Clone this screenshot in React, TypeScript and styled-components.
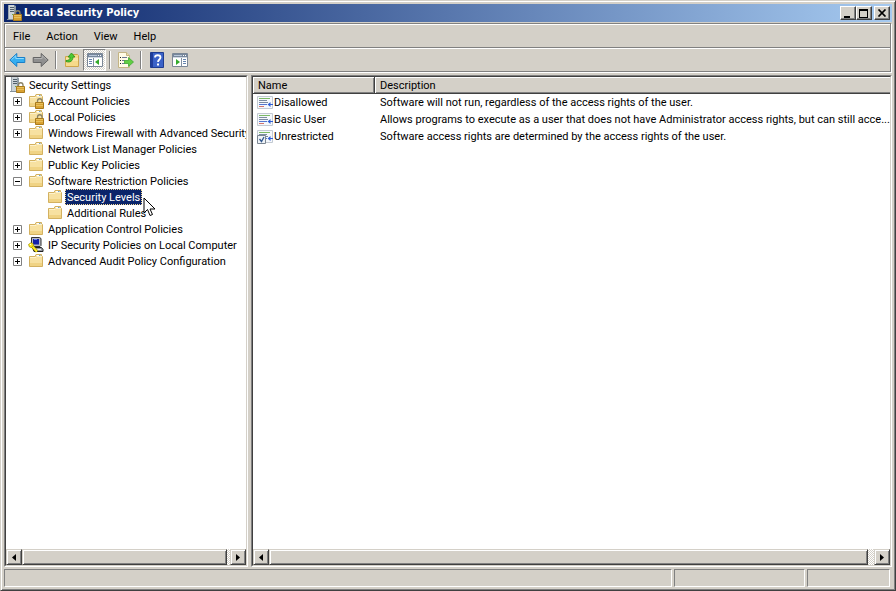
import React from "react";
import styled, { createGlobalStyle, css } from "styled-components";

const face = "#d4d0c8";
const shadow = "#808080";
const dark = "#404040";
const navy = "#0a246a";

const GlobalStyle = createGlobalStyle`
  *, *::before, *::after { box-sizing: border-box; }
  html, body { margin: 0; overflow: hidden; }
  body, button, table {
    font-family: Roboto, Tahoma, "DejaVu Sans", sans-serif;
    font-size: 11px;
    line-height: 16px;
    color: #000;
  }
  button { border: 0; padding: 0; background: none; cursor: default; }
  svg { display: block; flex: none; }
`;

const raised = css`
  background: ${face};
  border: 1px solid;
  border-color: ${face} ${dark} ${dark} ${face};
  box-shadow: inset 1px 1px #fff, inset -1px -1px ${shadow};
`;

const Window = styled.main`
  ${raised}
  display: flex;
  flex-direction: column;
  height: 100vh;
  padding: 3px;
`;

const TitleBar = styled.header`
  display: flex;
  align-items: center;
  height: 18px;
  flex: none;
  padding: 0 2px;
  background: linear-gradient(90deg, ${navy}, #a6caf0);
`;

const Title = styled.h1`
  flex: 1;
  margin: 0 0 0 2px;
  font-family: "DejaVu Sans Condensed", Tahoma, sans-serif;
  font-size: 11px;
  line-height: 18px;
  font-weight: 700;
  color: #fff;
`;

const CaptionButtons = styled.div`
  display: flex;
`;

const CaptionButton = styled.button<{ $apart?: boolean }>`
  display: grid;
  place-items: center;
  width: 16px;
  height: 14px;
  margin-left: ${(p) => (p.$apart ? 2 : 0)}px;
  background: ${face};
  border: 1px solid;
  border-color: #fff ${dark} ${dark} #fff;
  box-shadow: inset -1px -1px ${shadow};
`;

const Bars = styled.div`
  flex: none;
  margin: 1px 1px 3px 0;
  border: 1px solid ${shadow};
  box-shadow: 1px 1px #fff;
`;

const MenuBar = styled.nav`
  display: flex;
  height: 24px;
  border-bottom: 1px solid ${shadow};
  box-shadow: inset 1px 1px #fff;
`;

const MenuItem = styled.button`
  padding: 2px 8px 0;
`;

const ToolBar = styled.div`
  display: flex;
  align-items: center;
  height: 23px;
  padding-left: 1px;
  box-shadow: inset 1px 1px #fff;
`;

const ToolButton = styled.button<{ $pressed?: boolean }>`
  display: grid;
  place-items: center;
  width: 23px;
  height: 22px;
  ${(p) =>
    p.$pressed &&
    css`
      border: 1px solid;
      border-color: ${shadow} #fff #fff ${shadow};
      background: repeating-conic-gradient(#fff 0 25%, ${face} 0 50%) 0 0 / 2px 2px;
    `}
`;

const Separator = styled.div`
  width: 2px;
  height: 18px;
  margin: 0 3px;
  border-left: 1px solid ${shadow};
  border-right: 1px solid #fff;
`;

const Panes = styled.div`
  flex: 1;
  min-height: 0;
  display: grid;
  grid-template-columns: 244px minmax(0, 1fr);
  gap: 3px;
`;

const Pane = styled.section`
  display: flex;
  flex-direction: column;
  min-height: 0;
  min-width: 0;
  background: #fff;
  border: 1px solid;
  border-color: ${shadow} #fff #fff ${shadow};
`;

const PaneInner = styled.div`
  display: flex;
  flex-direction: column;
  flex: 1;
  min-height: 0;
  border: 1px solid;
  border-color: ${dark} ${face} ${face} ${dark};
`;

const Content = styled.div`
  flex: 1;
  min-height: 0;
  overflow: hidden;
`;

const Tree = styled.ul`
  list-style: none;
  margin: 0;
  padding: 0;
`;

const TreeRow = styled.li<{ $level: number }>`
  position: relative;
  display: flex;
  align-items: center;
  height: 16px;
  padding-left: ${(p) => [3, 7, 41][p.$level]}px;
  white-space: nowrap;
`;

const Expander = styled.button<{ $empty?: boolean }>`
  width: 9px;
  height: 9px;
  flex: none;
  margin-right: 6px;
  visibility: ${(p) => (p.$empty ? "hidden" : "visible")};
`;

const TreeLabel = styled.button<{ $selected?: boolean }>`
  height: 16px;
  margin-left: 2px;
  padding: 2px 2px 0;
  line-height: 14px;
  white-space: nowrap;
  ${(p) =>
    p.$selected &&
    css`
      color: #fff;
      background: ${navy};
      outline: 1px dotted #f5db95;
      outline-offset: -1px;
    `}
`;

const Pointer = styled.svg`
  position: absolute;
  left: 137px;
  top: 8px;
  z-index: 1;
`;

const List = styled.table`
  width: 100%;
  table-layout: fixed;
  border-collapse: separate;
  border-spacing: 0;
`;

const HeadCell = styled.th<{ $name?: boolean }>`
  width: ${(p) => (p.$name ? "122px" : "auto")};
  height: 17px;
  padding: 2px 5px 0;
  text-align: left;
  font-weight: 400;
  line-height: 14px;
  background: ${face};
  border-bottom: 1px solid ${dark};
  border-right: ${(p) => (p.$name ? `1px solid ${dark}` : "0")};
  box-shadow: inset 1px 1px #fff, inset ${(p) => (p.$name ? "-1px" : "0")} -1px ${shadow};
`;

const Cell = styled.td`
  height: 17px;
  padding: 1px 0 0 5px;
  line-height: 16px;
  white-space: nowrap;
  overflow: hidden;
  text-overflow: ellipsis;
`;

const NameCell = styled.div`
  display: flex;
  align-items: center;
  gap: 1px;
  margin-left: -1px;
`;

const ScrollBar = styled.div`
  display: flex;
  height: 16px;
  flex: none;
  background: repeating-conic-gradient(#fff 0 25%, ${face} 0 50%) 0 0 / 2px 2px;
`;

const ScrollButton = styled.button`
  ${raised}
  display: grid;
  place-items: center;
  width: 16px;
  height: 16px;
`;

const Thumb = styled.div<{ $rest: number }>`
  ${raised}
  flex: 1;
  margin-right: ${(p) => p.$rest}px;
`;

const StatusBar = styled.footer`
  display: grid;
  grid-template-columns: minmax(0, 1fr) 131px 83px;
  gap: 2px;
  height: 18px;
  flex: none;
  margin: 2px 2px 0 0;
`;

const StatusCell = styled.div`
  border: 1px solid;
  border-color: ${shadow} #fff #fff ${shadow};
`;

const Lock = () => (
  <g>
    <path d="M9.500 10V8a2 2 0 0 1 4.500 0v2" fill="none" stroke="#8b8468" strokeWidth="1.300" />
    <path d="M7.500 9.500h8v6h-8z" fill="#d9a233" stroke="#a97a1c" />
    <path d="M8 10.500h7M8 12.500h7" stroke="#e8c15c" />
  </g>
);

const ServerLockIcon = () => (
  <svg width="16" height="16" viewBox="0 0 16 16">
    <path d="M2 0h6l2 1v13l-2 1H2z" fill="#8e9ba5" />
    <path d="M2 0h6v15H2z" fill="#ccd3d8" />
    <path d="M2 0h1v15H2z" fill="#9aa6af" />
    <path d="M4 2.500h4M4 4.500h4M4 6.500h4" stroke="#4f5e6a" />
    <path d="M6 9h1v1H6z" fill="#62b34b" />
    <path d="M1 14.500h8" stroke="#84919b" />
    <Lock />
  </svg>
);

const FolderIcon = ({ locked }: { locked?: boolean }) => (
  <svg width="16" height="16" viewBox="0 0 16 16">
    <path d="M1.500 3.500h5.500l1-2h5.500v2h1v10h-13z" fill="#f3d88f" stroke="#d3b160" />
    <path d="M8.500 2.500h4" stroke="#fff" />
    <path d="M11 2.500h1.500" stroke="#6aa3cf" />
    <path d="M2 4h12v9H2z" fill="#f7e1a1" />
    <path d="M2 4.500h6l1-1h5" stroke="#fdf2cd" fill="none" />
    <path d="M2 10h12v3H2z" fill="#f0d384" />
    {locked && <Lock />}
  </svg>
);

const IpSecIcon = () => (
  <svg width="16" height="16" viewBox="0 0 16 16">
    <path d="M3.500.5h8l1.500 1v7l-1 1h-8.500z" fill="#b8bac4" stroke="#333" />
    <path d="M5 2h6v5.500H5z" fill="#1420a8" />
    <path d="M6 2.500h3" stroke="#6a86f0" />
    <path d="M4.500 10.500h9l1.500 2v2H6z" fill="#9a9da6" stroke="#222" />
    <path d="M8 12.500h5" stroke="#eee" />
    <path d="M4 9l5 5.500" stroke="#867500" strokeWidth="3" />
    <path d="M4 9l5 5.500" stroke="#ffed20" strokeWidth="2" />
    <path d="M.5 7.500l2-1.500h2l1 2-2 2.500-2-.5z" fill="#ffed20" stroke="#a08e00" strokeWidth=".7" />
    <path d="M2 7h1v1H2z" fill="#fff" />
  </svg>
);

const ArrowIcon = ({ forward }: { forward?: boolean }) => {
  const fill = forward ? "#8f8f8f" : "#36aef0";
  const line = forward ? "#646464" : "#1a7fc8";
  const light = forward ? "#b4b4b4" : "#8edcff";
  return (
    <svg width="17" height="16" viewBox="0 0 17 16">
      <g transform={forward ? "matrix(-1 0 0 1 17 0)" : undefined}>
        <path d="M.8 8l7-6.500v4h8v5h-8v4z" fill={fill} stroke={line} strokeLinejoin="round" />
        <path d="M2.500 7.700l4.300-4v2.800h8" fill="none" stroke={light} />
      </g>
    </svg>
  );
};

const UpFolderIcon = () => (
  <svg width="16" height="16" viewBox="0 0 16 16">
    <path d="M1.500 4.500h6l1-2h5l1 1v11h-13z" fill="#f6da8a" stroke="#cfa64c" />
    <path d="M2 6h12v3H2z" fill="#f9e4a4" />
    <path d="M2 8.500c3 0 4-1 4-3.500H4L7.500 1 11 5H9c0 4-3 6-7 4.500z" fill="#4dc934" stroke="#279018" strokeWidth=".8" />
  </svg>
);

const PaneIcon = ({ right }: { right?: boolean }) => (
  <svg width="16" height="14" viewBox="0 0 16 14">
    <path d="M.5.5h15v13H.5z" fill="#fff" stroke="#7b8796" />
    <path d="M1 1h14v3H1z" fill="#77879c" />
    <path d="M2 2.500h8" stroke="#b9c7d9" />
    <path d="M11 2.500h1M13 2.500h1" stroke="#fff" />
    <path d="M1 4.500h14" stroke="#d0d8e2" />
    {right ? (
      <>
        <path d="M9.500 5v8" stroke="#8290a2" />
        <path d="M4 6l4 3-4 3z" fill="#34aa2b" />
        <path d="M11 6.500h3M11 8.500h3M11 10.500h3" stroke="#6684ad" />
      </>
    ) : (
      <>
        <path d="M6.500 5v8" stroke="#8290a2" />
        <path d="M12 6L8 9l4 3z" fill="#34aa2b" />
        <path d="M2 6.500h3M2 8.500h3M2 10.500h3" stroke="#6684ad" />
      </>
    )}
  </svg>
);

const ExportIcon = () => (
  <svg width="17" height="16" viewBox="0 0 17 16">
    <path d="M1.500.5h8l3 3v12h-11z" fill="#fffbe6" stroke="#c4b484" />
    <path d="M9.500.5v3h3" fill="#e9dcae" stroke="#c4b484" />
    <path d="M3 5.500h1M3 8.500h1M3 11.500h1" stroke="#222" />
    <path d="M5 5.500h5M5 8.500h3M5 11.500h3" stroke="#6c7794" />
    <path d="M7.500 8.500h4v-3l5 4.500-5 4.500v-3h-4z" fill="#61ce43" stroke="#3fa832" strokeWidth=".8" />
  </svg>
);

const HelpIcon = () => (
  <svg width="14" height="16" viewBox="0 0 14 16">
    <path d="M.5.5h13v15H.5z" fill="#3b62c8" stroke="#1e3c91" />
    <path d="M1 1h2v14H1z" fill="#203d9a" />
    <path d="M5 5.500C5 2.500 10.500 2.500 10.500 5.500c0 2-2.500 2-2.500 4.500" fill="none" stroke="#fff" strokeWidth="1.800" />
    <path d="M7 11.500h2v2H7z" fill="#fff" />
  </svg>
);

const LevelIcon = ({ checked }: { checked?: boolean }) => (
  <svg width="16" height="14" viewBox="0 0 16 14">
    <path d="M.5.5h15v12H.5z" fill="#f5f8fc" stroke="#c3cad2" />
    <path d="M2 2.500h11" stroke="#7dba66" />
    <path d="M2 4.500h8M2 6.500h9" stroke="#7c8ba0" />
    <path d="M2 8.500h8" stroke="#5577d0" />
    <path d="M2 10.500h5" stroke="#d5766c" />
    <path d="M10.500 8.500l3-2.500v2H16v1h-2.500v2z" fill="#315fd3" />
    {checked && (
      <>
        <path d="M.5 5.500h8v8h-8z" fill="#eef2f6" stroke="#7b8692" />
        <path d="M2.500 9l2 2.500L7 7" fill="none" stroke="#31578f" strokeWidth="1.300" />
      </>
    )}
  </svg>
);

type Item = {
  label: string;
  level: number;
  icon: React.ReactNode;
  state?: "open" | "closed";
  selected?: boolean;
};

const items: Item[] = [
  { label: "Security Settings", level: 0, icon: <ServerLockIcon /> },
  { label: "Account Policies", level: 1, icon: <FolderIcon locked />, state: "closed" },
  { label: "Local Policies", level: 1, icon: <FolderIcon locked />, state: "closed" },
  { label: "Windows Firewall with Advanced Security", level: 1, icon: <FolderIcon />, state: "closed" },
  { label: "Network List Manager Policies", level: 1, icon: <FolderIcon /> },
  { label: "Public Key Policies", level: 1, icon: <FolderIcon />, state: "closed" },
  { label: "Software Restriction Policies", level: 1, icon: <FolderIcon />, state: "open" },
  { label: "Security Levels", level: 2, icon: <FolderIcon />, selected: true },
  { label: "Additional Rules", level: 2, icon: <FolderIcon /> },
  { label: "Application Control Policies", level: 1, icon: <FolderIcon />, state: "closed" },
  { label: "IP Security Policies on Local Computer", level: 1, icon: <IpSecIcon />, state: "closed" },
  { label: "Advanced Audit Policy Configuration", level: 1, icon: <FolderIcon />, state: "closed" },
];

const levels = [
  { name: "Disallowed", text: "Software will not run, regardless of the access rights of the user." },
  {
    name: "Basic User",
    text: "Allows programs to execute as a user that does not have Administrator access rights, but can still acce...",
  },
  { name: "Unrestricted", text: "Software access rights are determined by the access rights of the user.", checked: true },
];

const HorizontalScroll = ({ rest }: { rest: number }) => (
  <ScrollBar>
    <ScrollButton aria-label="Scroll left">
      <svg width="4" height="7" viewBox="0 0 4 7">
        <path d="M4 0v7L0 3.500z" />
      </svg>
    </ScrollButton>
    <Thumb $rest={rest} />
    <ScrollButton aria-label="Scroll right">
      <svg width="4" height="7" viewBox="0 0 4 7">
        <path d="M0 0v7l4-3.500z" />
      </svg>
    </ScrollButton>
  </ScrollBar>
);

export default function App() {
  return (
    <>
      <GlobalStyle />
      <Window>
        <TitleBar>
          <ServerLockIcon />
          <Title>Local Security Policy</Title>
          <CaptionButtons>
            <CaptionButton aria-label="Minimize">
              <svg width="10" height="9" viewBox="0 0 10 9">
                <path d="M1 7h6v2H1z" />
              </svg>
            </CaptionButton>
            <CaptionButton aria-label="Maximize">
              <svg width="10" height="9" viewBox="0 0 10 9">
                <path d="M0 0h9v9H0zM1 2v6h7V2z" fillRule="evenodd" />
              </svg>
            </CaptionButton>
            <CaptionButton aria-label="Close" $apart>
              <svg width="10" height="8" viewBox="0 0 10 8">
                <path d="M1.500.5l7 7M8.500.5l-7 7" stroke="#000" strokeWidth="1.700" />
              </svg>
            </CaptionButton>
          </CaptionButtons>
        </TitleBar>
        <Bars>
          <MenuBar aria-label="Menu">
            {["File", "Action", "View", "Help"].map((name) => (
              <MenuItem key={name}>{name}</MenuItem>
            ))}
          </MenuBar>
          <ToolBar role="toolbar">
            <ToolButton aria-label="Back"><ArrowIcon /></ToolButton>
            <ToolButton aria-label="Forward"><ArrowIcon forward /></ToolButton>
            <Separator />
            <ToolButton aria-label="Up one level"><UpFolderIcon /></ToolButton>
            <ToolButton aria-label="Show or hide console tree" aria-pressed="true" $pressed><PaneIcon /></ToolButton>
            <Separator />
            <ToolButton aria-label="Export list"><ExportIcon /></ToolButton>
            <Separator />
            <ToolButton aria-label="Help"><HelpIcon /></ToolButton>
            <ToolButton aria-label="Show or hide action pane"><PaneIcon right /></ToolButton>
          </ToolBar>
        </Bars>
        <Panes>
          <Pane aria-label="Console tree">
            <PaneInner>
              <Content>
                <Tree>
                  {items.map((item) => (
                    <TreeRow key={item.label} $level={item.level}>
                      {item.level === 1 && (
                        <Expander
                          $empty={!item.state}
                          aria-label={item.state === "open" ? "Collapse" : "Expand"}
                        >
                          <svg width="9" height="9" viewBox="0 0 9 9">
                            <path d="M.5.5h8v8h-8z" fill="#fff" stroke="#808080" />
                            <path d={item.state === "open" ? "M2 4.500h5" : "M2 4.500h5M4.500 2v5"} stroke="#000" />
                          </svg>
                        </Expander>
                      )}
                      {item.icon}
                      <TreeLabel $selected={item.selected}>{item.label}</TreeLabel>
                      {item.selected && (
                        <Pointer width="13" height="20" viewBox="0 0 13 20" aria-hidden="true">
                          <path d="M1 1v15l3.500-3.500 2.500 6 2.500-1-2.500-5.500h5z" fill="#fff" stroke="#000" />
                        </Pointer>
                      )}
                    </TreeRow>
                  ))}
                </Tree>
              </Content>
              <HorizontalScroll rest={3} />
            </PaneInner>
          </Pane>
          <Pane aria-label="Security levels">
            <PaneInner>
              <Content>
                <List>
                  <thead>
                    <tr>
                      <HeadCell $name>Name</HeadCell>
                      <HeadCell>Description</HeadCell>
                    </tr>
                  </thead>
                  <tbody>
                    {levels.map((level) => (
                      <tr key={level.name}>
                        <Cell>
                          <NameCell>
                            <LevelIcon checked={level.checked} />
                            {level.name}
                          </NameCell>
                        </Cell>
                        <Cell>{level.text}</Cell>
                      </tr>
                    ))}
                  </tbody>
                </List>
              </Content>
              <HorizontalScroll rest={6} />
            </PaneInner>
          </Pane>
        </Panes>
        <StatusBar>
          <StatusCell />
          <StatusCell />
          <StatusCell />
        </StatusBar>
      </Window>
    </>
  );
}
